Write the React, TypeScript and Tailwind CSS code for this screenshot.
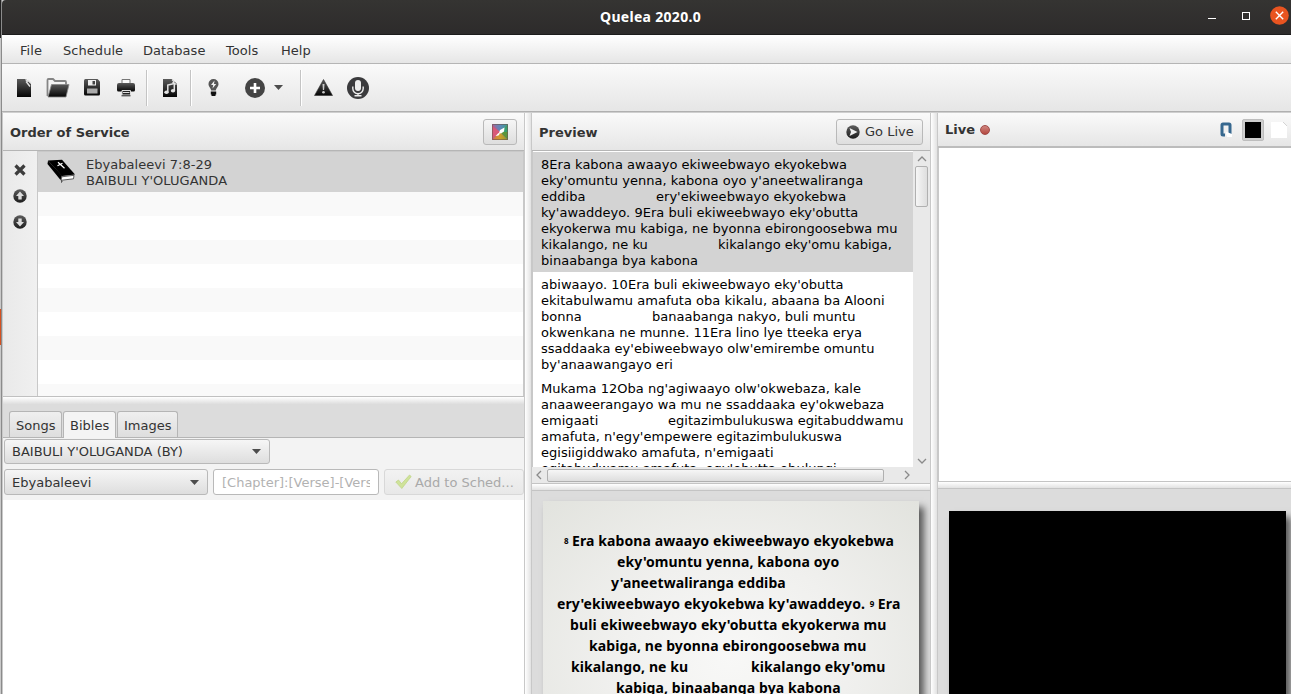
import type { ReactNode } from "react";

const previewVerses: { selected: boolean; lines: [string, string?, string?][] }[] = [
  {
    selected: true,
    lines: [
      ["8Era kabona awaayo ekiweebwayo ekyokebwa"],
      ["eky'omuntu yenna, kabona oyo y'aneetwaliranga"],
      ["eddiba", "ery'ekiweebwayo ekyokebwa", "w-[115px]"],
      ["ky'awaddeyo. 9Era buli ekiweebwayo eky'obutta"],
      ["ekyokerwa mu kabiga, ne byonna ebirongoosebwa mu"],
      ["kikalango, ne ku", "kikalango eky'omu kabiga,", "w-[177px]"],
      ["binaabanga bya kabona"],
    ],
  },
  {
    selected: false,
    lines: [
      ["abiwaayo. 10Era buli ekiweebwayo eky'obutta"],
      ["ekitabulwamu amafuta oba kikalu, abaana ba Alooni"],
      ["bonna", "banaabanga nakyo, buli muntu", "w-[111px]"],
      ["okwenkana ne munne. 11Era lino lye tteeka erya"],
      ["ssaddaaka ey'ebiweebwayo olw'emirembe omuntu"],
      ["by'anaawangayo eri"],
    ],
  },
  {
    selected: false,
    lines: [
      ["Mukama 12Oba ng'agiwaayo olw'okwebaza, kale"],
      ["anaaweerangayo wa mu ne ssaddaaka ey'okwebaza"],
      ["emigaati", "egitazimbulukuswa egitabuddwamu", "w-[127px]"],
      ["amafuta, n'egy'empewere egitazimbulukuswa"],
      ["egisiigiddwako amafuta, n'emigaati"],
      ["egitabudwamu amafuta, egy'obutta obulungi"],
    ],
  },
];

const BAR = "bg-linear-to-b from-[#fafafa] to-[#e6e6e6]";
const BUTTON = "rounded-[3px] border border-[#b9b9b9] bg-linear-to-b from-[#f6f6f6] to-[#dedede]";

function Defs() {
  return (
    <svg width="0" height="0" className="absolute">
      <defs>
        <linearGradient id="ink" x1="0" y1="0" x2="0" y2="1">
          <stop offset="0" stopColor="#5a5a5a" />
          <stop offset="1" stopColor="#050505" />
        </linearGradient>
        <linearGradient id="disc" x1="0" y1="0" x2="0" y2="1">
          <stop offset="0" stopColor="#5c5c5c" />
          <stop offset="1" stopColor="#1d1d1d" />
        </linearGradient>
      </defs>
    </svg>
  );
}

function Toolbar() {
  return (
    <div className={`flex h-[47px] shrink-0 items-center ${BAR}`}>
      <svg width="15" height="20" viewBox="0 0 15 20" className="ml-[15px]">
        <path d="M0 1h9l5 5v13H0z" fill="url(#ink)" />
        <path d="M8.500 1.500l2 1.500-1 1 3.500 4.500M11 2l3 3" stroke="#e4e4e4" strokeWidth="1.400" fill="none" />
      </svg>
      <svg width="24" height="20" viewBox="0 0 24 20" className="ml-[14px]">
        <path d="M1.500 18V2q0-1 1-1h4.500l2 2h10q1 0 1 1v3" fill="#f4f4f4" stroke="#858585" strokeWidth="1.800" />
        <path d="M5.500 6.500h17.500l-3 12.500H2z" fill="url(#ink)" stroke="#888" strokeWidth="0.800" />
      </svg>
      <svg width="17" height="17" viewBox="0 0 17 17" className="ml-[14px]">
        <path d="M1.500 0h12L16 2.500V15q0 1.500-1.500 1.500h-13Q0 16.500 0 15V1.500Q0 0 1.500 0z" fill="url(#ink)" />
        <path d="M4 1h8v5.500H4z" fill="#eee" />
        <path d="M8.500 2h2.500v3.500H8.500z" fill="#444" />
        <path d="M3 9.500h10.500v5H3z" fill="#aaa" />
      </svg>
      <svg width="18" height="19" viewBox="0 0 18 19" className="ml-[16px]">
        <path d="M5 6V1.500h8V6" fill="#fafafa" stroke="#777" />
        <path d="M2 5h14q2 0 2 2v5q0 1.500-1.500 1.500h-15Q0 13.500 0 12V7q0-2 2-2z" fill="url(#ink)" />
        <path d="M5 12.500h8.500v4.500H5zM6 14.500h6.500" fill="#222" stroke="#ddd" />
        <path d="M4.500 17.800h9" stroke="#222" />
      </svg>
      <Separator className="ml-[11px]" />
      <svg width="15" height="20" viewBox="0 0 15 20" className="ml-[15px]">
        <path d="M0 1h9l5 5v13H0z" fill="url(#ink)" />
        <path d="M9 1.500l2 2-1 1 3.500 2" stroke="#e4e4e4" strokeWidth="1.200" fill="none" />
        <path d="M4.800 14V7l6.500-1.500V12.500" stroke="#e4e4e4" strokeWidth="1.500" fill="none" />
        <ellipse cx="3.500" cy="14.300" rx="2.200" ry="1.700" fill="#e4e4e4" />
        <ellipse cx="10" cy="12.800" rx="2.200" ry="1.700" fill="#e4e4e4" />
      </svg>
      <Separator className="ml-[12px]" />
      <svg width="11" height="18" viewBox="0 0 11 18" className="ml-[16px]">
        <path d="M5.500 0a5 5 0 0 1 5 5c0 3-2.200 3.500-2.700 6.500H3.200C2.700 8.500.5 8 .5 5a5 5 0 0 1 5-5z" fill="#555" />
        <path d="M6.500 1.500L3 6h2.200L4.500 9.500 8.200 5H6z" fill="#f0f0f0" />
        <path d="M2.800 12.500h5.400v3H7.500V17h-4v-1.500h-.7z" fill="#111" />
      </svg>
      <svg width="20" height="20" viewBox="0 0 20 20" className="ml-[26px]">
        <circle cx="10" cy="10" r="10" fill="#444" />
        <path d="M10 5v10M5 10h10" stroke="#fff" strokeWidth="2.600" />
      </svg>
      <Arrow className="ml-[9px]" />
      <Separator className="ml-[17px]" />
      <svg width="19" height="17" viewBox="0 0 19 17" className="ml-[12px]">
        <path d="M9.500.5L18.500 16.500H.5z" fill="url(#ink)" stroke="#333" strokeWidth="0.600" strokeLinejoin="round" />
        <path d="M8.500 5h2l-.4 6H8.900z" fill="#ccc" />
        <circle cx="9.500" cy="13.300" r="1.300" fill="#ccc" />
      </svg>
      <svg width="22" height="22" viewBox="0 0 22 22" className="ml-[14px]">
        <circle cx="11" cy="11" r="11" fill="#3b3b3d" />
        <rect x="8" y="3" width="6" height="11" rx="3" fill="#eee" />
        <path d="M5.800 9.500v2a5.200 5.200 0 0 0 10.400 0v-2M11 16.500v2M7.500 18.700h7" stroke="#eee" strokeWidth="1.400" fill="none" />
      </svg>
    </div>
  );
}

function Separator({ className }: { className: string }) {
  return <div className={`h-9 w-[2px] border-l border-[#c4c4c4] bg-white ${className}`} />;
}

function Arrow({ className = "" }: { className?: string }) {
  return (
    <svg width="9" height="5" viewBox="0 0 9 5" className={`shrink-0 ${className}`}>
      <path d="M0 0h9L4.500 5z" fill="#4d4d4d" />
    </svg>
  );
}

function Disc({ children }: { children: ReactNode }) {
  return (
    <svg width="14" height="14" viewBox="0 0 14 14" className="shrink-0">
      <circle cx="7" cy="7" r="6.700" fill="url(#disc)" />
      {children}
    </svg>
  );
}

function ServicePanel() {
  return (
    <>
      <div className={`flex h-[38px] shrink-0 items-center justify-between border-b border-[#b5b5b5] pr-[7px] pl-[7px] ${BAR}`}>
        <span className="pt-[2px] font-bold">Order of Service</span>
        <div className={`flex h-[26px] w-[34px] items-center justify-center ${BUTTON}`}>
          <svg width="16" height="16" viewBox="0 0 16 16">
            <defs>
              <linearGradient id="topEdge" x1="0" y1="0" x2="1" y2="0">
                <stop offset="0" stopColor="#a06a9c" />
                <stop offset=".5" stopColor="#6088b8" />
                <stop offset="1" stopColor="#33a08c" />
              </linearGradient>
              <linearGradient id="bottomEdge" x1="0" y1="0" x2="1" y2="0">
                <stop offset="0" stopColor="#d9704a" />
                <stop offset=".5" stopColor="#d0a02c" />
                <stop offset="1" stopColor="#8a9a2c" />
              </linearGradient>
            </defs>
            <path d="M0 0h16v16H0z" fill="#b06090" />
            <path d="M0 0h16L8 8z" fill="url(#topEdge)" />
            <path d="M0 2l8 6-8 7z" fill="#d95a78" />
            <path d="M0 16L8 8l8 8z" fill="url(#bottomEdge)" />
            <path d="M16 0v9L8 8z" fill="#38a070" />
            <path d="M16 8v8L8 8z" fill="#5c963c" />
            <path d="M.5.5h15v15H.5z" fill="none" stroke="#6b5650" strokeOpacity=".6" />
            <path d="M12.500 3.500L8 6l-1 3 2 .5 3-2zM6.500 9l-3 3 3-.5 1.500-2z" fill="#fff" />
          </svg>
        </div>
      </div>
      <div className="flex h-[246px] shrink-0 border-b border-[#c0c0c0]">
        <div className="flex w-[35px] shrink-0 flex-col items-center gap-3 border-r border-[#c8c8c8] bg-linear-to-r from-[#e9e9e9] to-[#f0f0f0] pt-3">
          <svg width="14" height="14" viewBox="0 0 14 14">
            <path d="M2.500 2.500l9 9M11.500 2.500l-9 9" stroke="#3d3d3d" strokeWidth="3.200" />
          </svg>
          <Disc>
            <path d="M7 2.500l4 4.500H8.700v3.500H5.300V7H3z" fill="#ddd" />
          </Disc>
          <Disc>
            <path d="M7 11.500L3 7h2.300V3.500h3.400V7H11z" fill="#ddd" />
          </Disc>
        </div>
        <div className="flex flex-1 flex-col overflow-hidden border-r border-[#c8c8c8] bg-white">
          <div className="flex h-[41px] shrink-0 items-center bg-[#d3d3d3] shadow-[inset_0_1px_#c8c8c8]">
            <svg width="29" height="24" viewBox="0 0 29 24" className="mt-[-2px] ml-[9px]">
              <path d="M1 1.500L15 .8 28 15.500l-13 1.500z" fill="#000" />
              <path d="M1 1.500L.5 5 13.500 21l1.500-4.500z" fill="#000" />
              <path d="M14.800 17.800L27 16.300l-.5 3.500-12.500 1.500z" fill="#fff" stroke="#222" strokeWidth="0.700" />
              <path d="M11 3.200l6.500 6M10.500 6.800l5-2.500" stroke="#fff" strokeWidth="1.200" />
              <path d="M14.500 21v2.500l1-1" stroke="#555" fill="none" />
            </svg>
            <div className="ml-[10px] pt-[3px] leading-4 tracking-[0.03px]">
              <div>Ebyabaleevi 7:8-29</div>
              <div>BAIBULI Y'OLUGANDA</div>
            </div>
          </div>
          {Array.from({ length: 9 }, (_, i) => (
            <div key={i} className="h-6 shrink-0 odd:bg-white even:bg-[#f9f9f9]" />
          ))}
        </div>
      </div>
    </>
  );
}

function LibraryPanel() {
  return (
    <>
      <div className="flex h-[34px] shrink-0 items-end gap-px border-b border-[#b5b5b5] bg-[#dcdcdc] pl-[6px]">
        {["Songs", "Bibles", "Images"].map((tab) => (
          <div
            key={tab}
            className={`flex items-center rounded-t-[3px] border border-b-0 border-[#b5b5b5] pt-[3px] pl-[6px] ${
              tab === "Bibles"
                ? "-mb-px h-[27px] w-[53px] bg-[#f4f4f4] pb-px"
                : "h-[26px] bg-linear-to-b from-[#efefef] to-[#dedede]"
            } ${tab === "Images" ? "w-[61px]" : ""} ${tab === "Songs" ? "w-[53px]" : ""}`}
          >
            {tab}
          </div>
        ))}
      </div>
      <div className="flex h-[62px] shrink-0 flex-col gap-[5px] bg-[#f3f3f3] pl-px pt-px">
        <div className={`flex h-[25px] w-[266px] items-center justify-between pr-[8px] pl-[7px] ${BUTTON}`}>
          <span>BAIBULI Y'OLUGANDA (BY)</span>
          <Arrow />
        </div>
        <div className="flex h-[26px]">
          <div className={`flex w-[204px] items-center justify-between pr-[8px] pl-[7px] ${BUTTON}`}>
            <span className="pt-px">Ebyabaleevi</span>
            <Arrow />
          </div>
          <div className="ml-[5px] flex w-[166px] items-center rounded-[3px] border border-[#b9b9b9] bg-white px-[8px] text-[#b2b2b2]">
            <span className="overflow-hidden pt-px whitespace-nowrap">[Chapter]:[Verse]-[Verse]</span>
          </div>
          <div className="ml-[5px] flex w-[140px] items-center rounded-[3px] border border-[#d8d8d8] bg-linear-to-b from-[#f2f2f2] to-[#e8e8e8] pl-[10px] text-[#a9a9a9]">
            <svg width="17" height="16" viewBox="0 0 17 16" className="shrink-0">
              <path d="M.8 8l2.700-2 3 3.800L14.500 1l1.700 1.500L6.800 14.500z" fill="#cfe39a" stroke="#bdd283" strokeWidth="0.700" />
            </svg>
            <span className="ml-[3px] pt-px whitespace-nowrap">Add to Sched...</span>
          </div>
        </div>
      </div>
      <div className="flex-1 bg-white" />
    </>
  );
}

function Chevron({ turn }: { turn: string }) {
  return (
    <svg width="10" height="10" viewBox="0 0 10 10" className={`shrink-0 ${turn}`}>
      <path d="M1 7l4-4 4 4" fill="none" stroke="#8a8a8a" strokeWidth="1.300" />
    </svg>
  );
}

function PreviewPanel() {
  return (
    <>
      <div className={`flex h-[38px] shrink-0 items-center justify-between border-b border-[#b5b5b5] pr-[7px] pl-[7px] ${BAR}`}>
        <span className="pt-[2px] font-bold">Preview</span>
        <div className={`flex h-[26px] w-[87px] items-center pl-[9px] ${BUTTON}`}>
          <Disc>
            <path d="M3.500 3l8 4-8 4 1.500-4z" fill="#eee" />
          </Disc>
          <span className="ml-[5px] pt-px whitespace-nowrap">Go Live</span>
        </div>
      </div>
      <div className="flex h-[316px] shrink-0 border-l border-[#c8c8c8]">
        <div className="w-[380px] overflow-hidden bg-white pt-px text-black tracking-[0.025px]">
          {previewVerses.map((verse, i) => (
            <div key={i} className={`pt-[5px] pb-[3px] pl-2 leading-4 ${verse.selected ? "bg-[#d3d3d3]" : ""}`}>
              {verse.lines.map(([head, tail, width]) => (
                <div key={head} className="flex whitespace-pre">
                  <span className={width ?? ""}>{head}</span>
                  {tail && <span>{tail}</span>}
                </div>
              ))}
            </div>
          ))}
        </div>
        <div className="flex w-[17px] flex-col items-center bg-[#e9e9e9] pt-[3px] pb-px">
          <Chevron turn="" />
          <div className="mt-[2px] h-[41px] w-[13px] rounded-[2px] border border-[#b0b0b0] bg-linear-to-r from-[#f6f6f6] to-[#dedede]" />
          <div className="flex-1" />
          <Chevron turn="rotate-180" />
        </div>
      </div>
      <div className="flex h-[16px] shrink-0 items-center bg-[#e9e9e9] pr-[18px] pl-[2px]">
        <Chevron turn="-rotate-90" />
        <div className="ml-[3px] h-[13px] w-[337px] rounded-[2px] border border-[#b0b0b0] bg-linear-to-b from-[#f6f6f6] to-[#dedede]" />
        <div className="flex-1" />
        <Chevron turn="rotate-90" />
      </div>
      <HorizontalDivider />
      <div className="flex-1 overflow-hidden bg-[#dcdcdc] pt-[10px] pl-[11px]">
        <div className="h-[260px] w-[376px] bg-[radial-gradient(ellipse_at_50%_60%,#f8f8f7_0%,#f0f0ee_45%,#e2e3de_100%)] pt-[29px] font-['Noto_Sans',sans-serif] text-[14px] leading-[21px] font-bold tracking-[0.1px] text-black shadow-[5px_6px_7px_rgba(0,0,0,0.6)]">
          <SlideLine indent="pl-[21px]">
            <sup className="top-0 mr-[3px] inline-block w-[5px] text-[8px] leading-none align-[2px]">8</sup>Era kabona awaayo ekiweebwayo ekyokebwa
          </SlideLine>
          <SlideLine indent="pl-[74px]">eky'omuntu yenna, kabona oyo</SlideLine>
          <SlideLine indent="pl-[68px]">y'aneetwaliranga eddiba</SlideLine>
          <SlideLine indent="pl-[14px]">
            ery'ekiweebwayo ekyokebwa ky'awaddeyo.{" "}
            <sup className="top-0 mr-[3px] ml-px inline-block w-[5px] text-[8px] leading-none align-[2px]">9</sup>Era
          </SlideLine>
          <SlideLine indent="pl-[27px]">buli ekiweebwayo eky'obutta ekyokerwa mu</SlideLine>
          <SlideLine indent="pl-[46px]">kabiga, ne byonna ebirongoosebwa mu</SlideLine>
          <SlideLine indent="pl-[28px]">
            <span className="inline-block w-[180px]">kikalango, ne ku</span>kikalango eky'omu
          </SlideLine>
          <SlideLine indent="pl-[73px]">kabiga, binaabanga bya kabona</SlideLine>
        </div>
      </div>
    </>
  );
}

function SlideLine({ indent, children }: { indent: string; children: ReactNode }) {
  return <div className={`h-[21px] whitespace-nowrap ${indent}`}>{children}</div>;
}

function HorizontalDivider() {
  return <div className="h-[8px] shrink-0 border-y border-[#c4c4c4] bg-linear-to-b from-white to-[#e2e2e2]" />;
}

function VerticalDivider() {
  return <div className="w-[8px] shrink-0 border-x border-[#c8c8c8] bg-linear-to-r from-white to-[#e2e2e2]" />;
}

function LivePanel() {
  return (
    <>
      <div className={`flex h-[35px] shrink-0 items-center border-b-2 border-[#bcbcbc] pl-[7px] ${BAR}`}>
        <span className="pt-px font-bold">Live</span>
        <span className="ml-[5px] h-[10px] w-[10px] rounded-full border border-[#a04a46] bg-linear-to-b from-[#cf8580] to-[#b4473f]" />
        <svg width="12" height="16" viewBox="0 0 12 16" className="ml-[230px]">
          <path d="M5 13H3Q2 13 2 12V3Q2 2 3 2h6q1 0 1 1v9" fill="none" stroke="#37688f" strokeWidth="3" />
          <path d="M5.500 9.500L12 12v3H7z" fill="#fff" />
        </svg>
        <div className="ml-[10px] flex size-[22px] items-center justify-center rounded-[2px] border border-[#bdbdbd] bg-[#cecece]">
          <div className="size-4 bg-black" />
        </div>
        <svg width="16" height="16" viewBox="0 0 16 16" className="ml-[7px]">
          <path d="M0 0h12l4 4v12H0z" fill="#fff" />
          <path d="M12 0l4 4" stroke="#d4d4d4" />
        </svg>
      </div>
      <div className="h-[333px] shrink-0 border-l border-[#c8c8c8] bg-white" />
      <HorizontalDivider />
      <div className="flex-1 overflow-hidden bg-[#dcdcdc] pt-[22px] pl-[11px]">
        <div className="h-[260px] w-[337px] bg-black shadow-[5px_6px_7px_rgba(0,0,0,0.6)]" />
      </div>
    </>
  );
}

const menuItems = [
  { label: "File", width: "w-[43px]" },
  { label: "Schedule", width: "w-[80px]" },
  { label: "Database", width: "w-[83px]" },
  { label: "Tools", width: "w-[55px]" },
  { label: "Help", width: "w-[50px]" },
];

export default function App() {
  return (
    <div className="flex h-[694px] w-[1291px] overflow-hidden bg-[#c9c9c9] font-['DejaVu_Sans',sans-serif] text-[13px] leading-4 text-[#333]">
      <Defs />
      <div className="flex w-[2px] shrink-0 flex-col border-r border-[#8b8b8b]">
        <div className="h-[38px] bg-[#222]" />
        <div className="h-[271px]" />
        <div className="h-[36px] bg-[#d4501f]" />
      </div>
      <div className="flex w-[1289px] flex-col">
        <div className="flex h-[35px] shrink-0 items-center rounded-tl-[4px] border-b border-[#1c1c1c] bg-linear-to-b from-[#353432] to-[#2d2b2b] text-white">
          <div className="w-[1206px] pl-[91px] text-center font-['Noto_Sans',sans-serif] text-[14px] font-bold tracking-[0.3px]">Quelea 2020.0</div>
          <div className="mt-[3px] h-px w-2 bg-white" />
          <div className="mt-[-2px] ml-[26px] size-2 border border-white" />
          <svg width="19" height="19" viewBox="0 0 19 19" className="mt-[-3px] ml-[20px] shrink-0">
            <circle cx="9.500" cy="9.500" r="9.300" fill="#e95420" />
            <path d="M5.800 5.800l7.400 7.400M13.200 5.800l-7.400 7.400" stroke="#fff" strokeWidth="1.400" />
          </svg>
        </div>
        <div className="flex h-[29px] shrink-0 items-center border-b border-[#b5b5b5] bg-linear-to-b from-white to-[#e6e6e6] pt-[3px] pl-[18px]">
          {menuItems.map((item) => (
            <span key={item.label} className={`tracking-[0.05px] ${item.width}`}>
              {item.label}
            </span>
          ))}
        </div>
        <Toolbar />
        <div className="h-[2px] shrink-0 border-t border-[#b0b0b0] bg-[#cfcfcf]" />
        <div className="flex min-h-0 flex-1 pl-px">
          <div className="flex w-[521px] flex-col">
            <ServicePanel />
            <div className="h-[7px] shrink-0 bg-linear-to-b from-white to-[#dedede]" />
            <LibraryPanel />
          </div>
          <VerticalDivider />
          <div className="flex w-[398px] flex-col">
            <PreviewPanel />
          </div>
          <VerticalDivider />
          <div className="flex w-[353px] flex-col">
            <LivePanel />
          </div>
        </div>
      </div>
    </div>
  );
}
